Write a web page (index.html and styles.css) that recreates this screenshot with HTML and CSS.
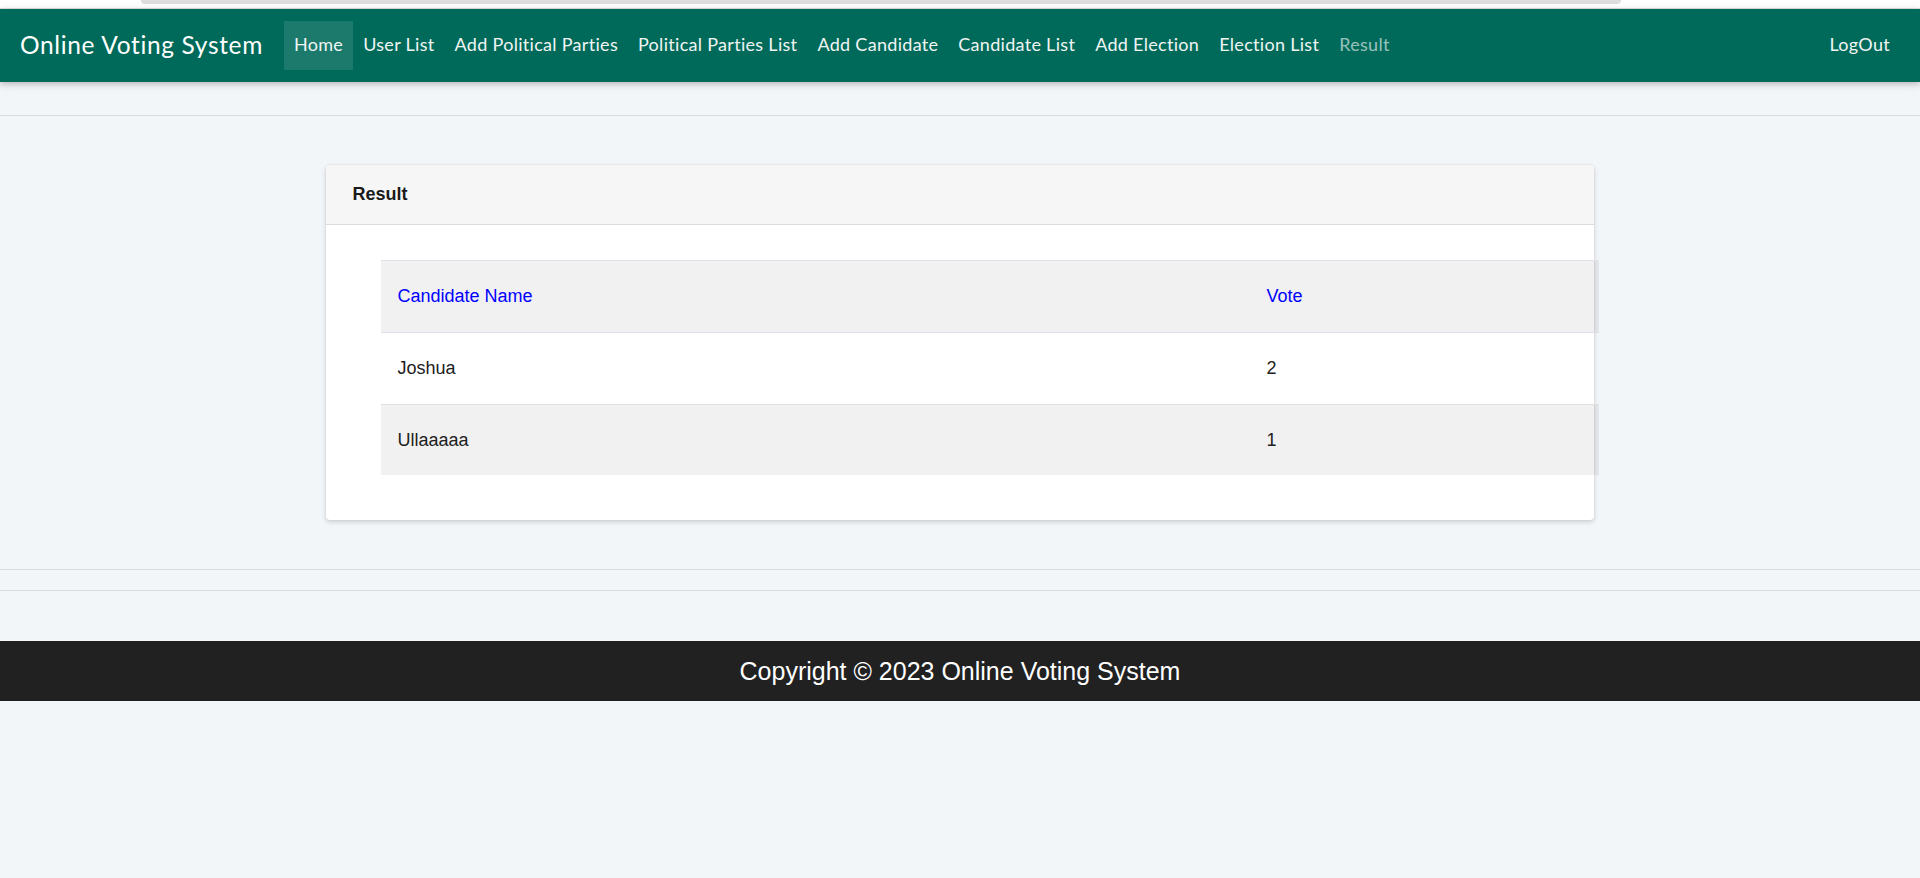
FILE: index.html
```html
<!DOCTYPE html>
<html lang="en">
<head>
<meta charset="utf-8">
<title>Online Voting System - Result</title>
<link rel="stylesheet" href="styles.css">
</head>
<body>
<div class="topstrip"><div class="topstrip-bar"></div></div>
<nav class="navbar">
  <a class="brand" href="#">Online Voting System</a>
  <a class="nav-item active" href="#">Home</a>
  <a class="nav-item" href="#">User List</a>
  <a class="nav-item" href="#">Add Political Parties</a>
  <a class="nav-item" href="#">Political Parties List</a>
  <a class="nav-item" href="#">Add Candidate</a>
  <a class="nav-item" href="#">Candidate List</a>
  <a class="nav-item" href="#">Add Election</a>
  <a class="nav-item" href="#">Election List</a>
  <a class="nav-item muted" href="#">Result</a>
  <a class="nav-item logout" href="#">LogOut</a>
</nav>
<main class="main">
  <hr class="rule rule-top">
  <section class="card">
    <header class="card-header">Result</header>
    <div class="card-body">
      <table class="result-table">
        <thead>
          <tr class="row-shade">
            <th class="col-name">Candidate Name</th>
            <th>Vote</th>
          </tr>
        </thead>
        <tbody>
          <tr>
            <td>Joshua</td>
            <td>2</td>
          </tr>
          <tr class="row-shade last">
            <td>Ullaaaaa</td>
            <td>1</td>
          </tr>
        </tbody>
      </table>
    </div>
  </section>
  <hr class="rule rule-a">
  <hr class="rule rule-b">
</main>
<footer class="footer">Copyright © 2023 Online Voting System</footer>
</body>
</html>
```
FILE: styles.css
```css
html, body {
  margin: 0;
  padding: 0;
}
body {
  background: #f3f6f9;
  font-family: "Liberation Sans", Arial, sans-serif;
  color: #212529;
  min-height: 878px;
}
a { text-decoration: none; }

.topstrip {
  height: 9px;
  background: #ffffff;
  border-bottom: 1px solid #e2e2e2;
  box-sizing: border-box;
}
.topstrip-bar {
  margin-left: 141px;
  width: 1480px;
  height: 4px;
  background: #dedede;
  border-radius: 0 0 9px 9px;
}

.navbar {
  display: flex;
  align-items: center;
  height: 73px;
  background: #006a5a;
  padding: 0 20px 0 10px;
  box-shadow: 0 2px 5px rgba(0,0,0,0.16), 0 2px 10px rgba(0,0,0,0.12);
  font-family: Lato, "Open Sans", sans-serif;
  position: relative;
  z-index: 1;
}
.brand {
  color: #ffffff;
  font-size: 24.5px;
  letter-spacing: 0.65px;
  padding: 0 10px 2px;
  margin-right: 11px;
  white-space: nowrap;
}
.nav-item {
  color: #f0f5f4;
  font-size: 18px;
  letter-spacing: 0.3px;
  line-height: 27px;
  padding: 10px 10px 12px;
  white-space: nowrap;
}
.nav-item.active {
  background: rgba(255,255,255,0.11);
}
.nav-item.muted {
  color: rgba(255,255,255,0.6);
}
.nav-item.logout {
  margin-left: auto;
}

.main {
  padding-top: 33px;
}
.rule {
  border: 0;
  border-top: 1px solid #d8dde3;
  margin: 0;
}
.rule-top { margin-bottom: 49px; }
.rule-a { margin-top: 49px; }
.rule-b { margin-top: 20px; margin-bottom: 50px; }

.card {
  width: 66%;
  margin: 0 auto;
  background: #ffffff;
  border-radius: 4px;
  box-shadow: 0 2px 5px rgba(0,0,0,0.16), 0 0 2px rgba(0,0,0,0.10);
}
.card-header {
  height: 60px;
  box-sizing: border-box;
  background: #f6f6f6;
  border-bottom: 1px solid #dcdcdc;
  border-radius: 4px 4px 0 0;
  padding: 0 26px;
  display: flex;
  align-items: center;
  font-weight: bold;
  font-size: 18px;
  color: #1a1a1a;
}
.card-body {
  padding: 35px 0 45px 55px;
}
.result-table {
  width: calc(100% + 5px);
  border-collapse: collapse;
  font-size: 18px;
  border-top: 1px solid #e0e0e8;
}
.result-table th,
.result-table td {
  text-align: left;
  padding: 25px 16px;
  line-height: 21px;
  font-weight: normal;
}
.result-table th {
  color: #0000ff;
  border-bottom: 1px solid #dedfe8;
}
.result-table td {
  color: #212121;
  border-bottom: 1px solid #e0e0e0;
}
.result-table tr.last td {
  border-bottom: 0;
  padding-bottom: 24px;
}
.col-name { width: 837px; }
.row-shade {
  background: rgba(0,0,0,0.055);
}

.footer {
  background: #212121;
  color: #ffffff;
  height: 60px;
  display: flex;
  align-items: center;
  justify-content: center;
  font-size: 25px;
}
```
